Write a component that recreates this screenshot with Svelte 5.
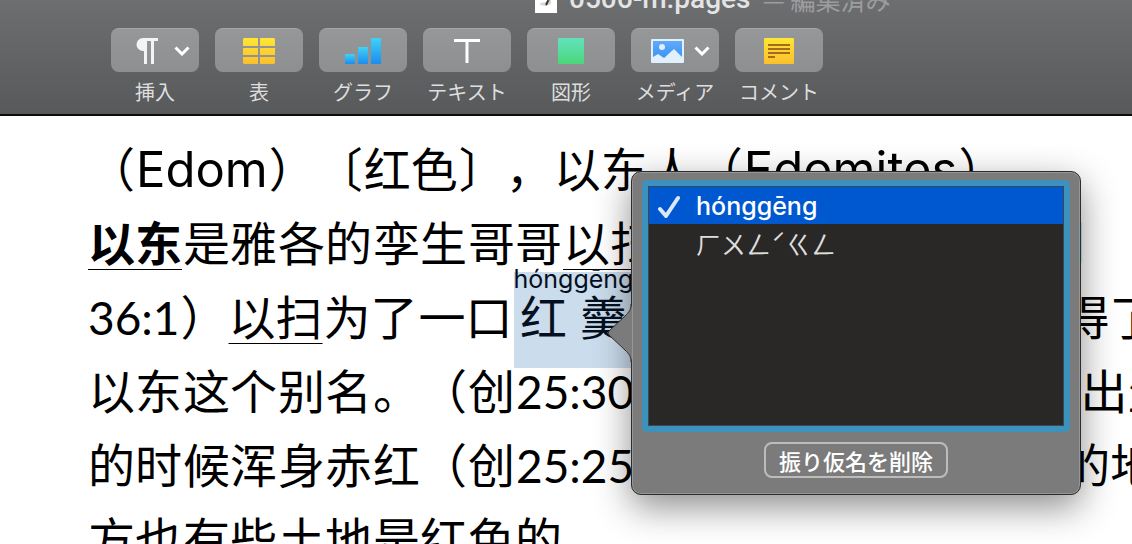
<script lang="ts">
  type Token = { t: string; kind?: 'word' | 'num' | 'link' | 'head' | 'ruby'; rt?: string };

  const tools = [
    { id: 'insert', label: '挿入', menu: true },
    { id: 'table', label: '表' },
    { id: 'chart', label: 'グラフ' },
    { id: 'text', label: 'テキスト' },
    { id: 'shape', label: '図形' },
    { id: 'media', label: 'メディア', menu: true },
    { id: 'comment', label: 'コメント' },
  ];

  const lines: Token[][] = [
    [{ t: '（' }, { t: 'Edom', kind: 'word' }, { t: '）〔' }, { t: '红色' }, { t: '〕，' }, { t: '以东' }, { t: '人（' }, { t: 'Edomites', kind: 'word' }, { t: '）' }],
    [{ t: '以东', kind: 'head' }, { t: '是雅' }, { t: '各的' }, { t: '孪生' }, { t: '哥哥' }, { t: '以扫', kind: 'link' }, { t: '的另' }, { t: '一个' }, { t: '名字' }, { t: '。（' }, { t: '创' }],
    [{ t: '36:1', kind: 'num' }, { t: '）' }, { t: '以扫', kind: 'link' }, { t: '为了' }, { t: '一口' }, { t: '红羹', kind: 'ruby', rt: 'hónggēng' }, { t: '出卖' }, { t: '了长' }, { t: '子权' }, { t: '，因' }, { t: '此' }, { t: '得了' }],
    [{ t: '以东' }, { t: '这个' }, { t: '别名' }, { t: '。（' }, { t: '创' }, { t: '25:30;34', kind: 'num' }, { t: '）另' }, { t: '外，' }, { t: '以扫' }, { t: '刚刚' }, { t: '出生' }],
    [{ t: '的时' }, { t: '候浑' }, { t: '身赤' }, { t: '红（' }, { t: '创' }, { t: '25:25', kind: 'num' }, { t: '），' }, { t: '以扫' }, { t: '后代' }, { t: '所居' }, { t: '住' }, { t: '的地' }],
    [{ t: '方也' }, { t: '有些' }, { t: '土地' }, { t: '是红' }, { t: '色的' }, { t: '。' }],
  ];

  const readings = [
    { text: 'hónggēng', script: 'pinyin' },
    { text: 'ㄏㄨㄥˊㄍㄥ', script: 'zhuyin' },
  ];
  let selected = $state('hónggēng');
  let open = $state(true);
</script>

<div class="window">
  <header class="toolbar">
    <div class="title">
      <svg class="doc-icon" width="22" height="28" viewBox="0 0 22 28" aria-hidden="true">
        <rect width="22" height="28" fill="#fff" />
        <path d="M5 18l6-1 5-2v4l-5 2-6-1z" fill="#d9d9d9" />
        <path d="M15 12l-4 8" stroke="#333" stroke-width="2" />
        <path d="M13 14l2 1" stroke="#e79a2c" stroke-width="2" />
      </svg>
      <span class="file">0506-m.pages</span>
      <span class="edited">— 編集済み</span>
    </div>
    <nav class="tools">
      {#each tools as tool}
        <div class="tool">
          <button class="tool-btn" class:with-menu={tool.menu} id="tool-{tool.id}" aria-labelledby="label-{tool.id}">
            {#if tool.id === 'insert'}
              <svg width="33" height="28" viewBox="-4 0 33 28">
                <path d="M8 1H23V4H19V27H16V4H12V27H9V14H8A6.5 6.5 0 0 1 8 1Z" fill="#f4f4f4" />
              </svg>
            {:else if tool.id === 'table'}
              <svg width="32" height="26" viewBox="0 0 32 26">
                <defs>
                  <linearGradient id="gold" x1="0" y1="0" x2="0" y2="26" gradientUnits="userSpaceOnUse">
                    <stop offset="0" stop-color="#fee635" /><stop offset="1" stop-color="#fbbf2c" />
                  </linearGradient>
                </defs>
                <path d="M1 0H15V8H0V1ZM17 0H31L32 1V8H17ZM0 10H15V17H0ZM17 10H32V17H17ZM0 19H15V26H1L0 25ZM17 19H32V25L31 26H17Z" fill="url(#gold)" />
              </svg>
            {:else if tool.id === 'chart'}
              <svg width="36" height="26" viewBox="0 0 36 26">
                <defs>
                  <linearGradient id="sky" x1="0" y1="0" x2="0" y2="1">
                    <stop offset="0" stop-color="#3fd2f5" /><stop offset="1" stop-color="#1c8dee" />
                  </linearGradient>
                </defs>
                <rect y="16" width="10" height="10" rx="1" fill="url(#sky)" />
                <rect x="13" y="9" width="10" height="17" rx="1" fill="url(#sky)" />
                <rect x="26" width="10" height="26" rx="1" fill="url(#sky)" />
              </svg>
            {:else if tool.id === 'text'}
              <svg width="26" height="24" viewBox="0 0 26 24">
                <path d="M0 1.5H26M13 1.5V24" stroke="#fff" stroke-width="3" />
              </svg>
            {:else if tool.id === 'shape'}
              <svg width="26" height="26" viewBox="0 0 26 26">
                <defs>
                  <linearGradient id="mint" x1="0" y1="0" x2="0" y2="1">
                    <stop offset="0" stop-color="#63e2bd" /><stop offset="1" stop-color="#4bd67b" />
                  </linearGradient>
                </defs>
                <rect width="26" height="26" rx="1" fill="url(#mint)" />
              </svg>
            {:else if tool.id === 'media'}
              <svg width="33" height="24" viewBox="0 0 33 24">
                <defs>
                  <linearGradient id="blue" x1="0" y1="0" x2="0" y2="1">
                    <stop offset="0" stop-color="#62aaf9" /><stop offset="1" stop-color="#3490f5" />
                  </linearGradient>
                </defs>
                <rect width="33" height="24" rx="1" fill="#e2effc" />
                <rect x="2" y="2" width="29" height="20" fill="url(#blue)" />
                <circle cx="11" cy="8" r="3" fill="#e2effc" />
                <path d="M2 18L7 15L13 19L23 10L31 18V22H2Z" fill="#e2effc" />
              </svg>
            {:else}
              <svg width="30" height="26" viewBox="0 0 30 26">
                <defs>
                  <linearGradient id="note" x1="0" y1="0" x2="0" y2="1">
                    <stop offset="0" stop-color="#fee635" /><stop offset="1" stop-color="#fbbf2c" />
                  </linearGradient>
                </defs>
                <rect width="30" height="26" rx="1" fill="url(#note)" />
                <path d="M4 7H26M4 11H26M4 15H26M4 19H11" stroke="#a56a1c" stroke-width="2" />
              </svg>
            {/if}
            {#if tool.menu}
              <svg class="chevron" width="16" height="10" viewBox="0 0 16 10">
                <path d="M1.5 1.5L8 8L14.5 1.5" fill="none" stroke="#fff" stroke-width="3" />
              </svg>
            {/if}
          </button>
          <label class="tool-label" id="label-{tool.id}" for="tool-{tool.id}">{tool.label}</label>
        </div>
      {/each}
    </nav>
  </header>

  <main class="page" lang="zh-Hans">
    {#each lines as line}
      <p class="line">
        {#each line as token}
          {#if token.kind === 'ruby'}
            <span class="selection"><ruby>{token.t}<rt>{token.rt}</rt></ruby></span>
          {:else}
            <span class={token.kind}>{token.t}</span>
          {/if}
        {/each}
      </p>
    {/each}
  </main>

  {#if open}
    <div class="popover">
      <svg class="arrow" width="25" height="58" viewBox="0 0 25 58" aria-hidden="true">
        <path d="M25 0C24 6 22 8 18 12L2 27Q0 29 2 31L18 46C22 50 24 52 25 58Z" fill="#7b7b7b" />
        <path d="M24 0C24 6 22 8 18 12L2 27Q0 29 2 31L18 46C22 50 24 52 24 58" fill="none" stroke="#2d2d2d" />
      </svg>
      <div class="list" role="radiogroup" aria-label="振り仮名">
        {#each readings as reading}
          <label class="row {reading.script}" class:active={selected === reading.text}>
            <input type="radio" name="reading" value={reading.text} bind:group={selected} />
            <span class="mark">
              {#if selected === reading.text}
                <svg width="24" height="24" viewBox="0 0 24 24">
                  <path d="M4 15L10 22L22 4" fill="none" stroke="#dbe8fb" stroke-width="4" stroke-linecap="round" stroke-linejoin="round" />
                </svg>
              {/if}
            </span>
            {reading.text}
          </label>
        {/each}
      </div>
      <button class="remove" onclick={() => (open = false)}>振り仮名を削除</button>
    </div>
  {/if}
</div>

<style>
  :global(body) {
    margin: 0;
    background: #fff;
  }

  .window {
    position: relative;
    height: 100vh;
    overflow: hidden;
    font-family: Inter, "Noto Sans CJK JP", sans-serif;
  }

  /* Toolbar */
  .toolbar {
    box-sizing: border-box;
    height: 116px;
    overflow: hidden;
    background: linear-gradient(#6d6e70, #58595b);
    border-bottom: 2px solid #0c0c0c;
  }

  .title {
    display: flex;
    align-items: center;
    gap: 12px;
    height: 32px;
    margin-top: -17px;
    padding-left: 535px;
    line-height: 32px;
    white-space: nowrap;
  }
  .file { font-family: Roboto, sans-serif; font-size: 28px; font-weight: 500; color: #e4e4e5; }
  .edited { font-family: "Noto Sans CJK JP", sans-serif; font-size: 25px; color: #9c9d9f; }

  .tools {
    display: flex;
    gap: 16px;
    padding: 13px 111px 0;
  }

  .tool {
    display: flex;
    flex-direction: column;
    align-items: center;
    gap: 6px;
    width: 88px;
  }

  .tool-btn {
    display: flex;
    align-items: center;
    justify-content: center;
    gap: 10px;
    width: 88px;
    height: 44px;
    padding: 0;
    border: none;
    border-top: 1px solid #a5a6a8;
    border-radius: 8px;
    background: linear-gradient(#969799, #8e8f91);
  }
  .tool-btn.with-menu { padding-left: 10px; }

  .tool-label {
    font-family: "Noto Sans CJK JP", sans-serif;
    font-size: 20px;
    line-height: 28px;
    color: #dededf;
    white-space: nowrap;
  }

  /* Document */
  .page {
    padding: 14px 0 0 88px;
    font-family: "Noto Sans CJK SC", sans-serif;
    font-size: 47px;
    line-height: 74px;
    color: #000;
    text-spacing-trim: space-all;
  }

  .line {
    display: flex;
    align-items: baseline;
    gap: 1px;
    height: 74px;
    margin: 0;
    white-space: nowrap;
  }

  .word { font-family: Inter, sans-serif; font-size: 49px; }
  .num { font-family: Lato, sans-serif; font-size: 46px; }
  .head { font-weight: 700; }
  .head,
  .link {
    text-decoration: underline;
    text-decoration-thickness: 1px;
    text-underline-offset: 8px;
  }

  .selection {
    margin: -30px 0 -16px;
    padding-bottom: 16px;
    background: linear-gradient(transparent 5px, #cbdcec 5px);
    color: #04101f;
  }
  .selection rt {
    font-family: Inter, sans-serif;
    font-size: 25px;
    line-height: 20px;
  }

  /* Reading popover */
  .popover {
    position: absolute;
    top: 171px;
    left: 631px;
    box-sizing: border-box;
    width: 450px;
    padding: 8px 10px 16px;
    border: 1px solid #2d2d2d;
    border-radius: 10px;
    background: #7b7b7b;
    box-shadow: inset 0 0 0 1px #969696, 0 12px 36px rgba(0, 0, 0, 0.45);
    display: flex;
    flex-direction: column;
    align-items: center;
    gap: 10px;
  }

  .arrow {
    position: absolute;
    top: 132px;
    left: -25px;
  }

  .list {
    box-sizing: border-box;
    width: 100%;
    height: 252px;
    border: 6px solid #3c91bd;
    border-radius: 5px;
    background: #292826;
    box-shadow: inset 0 0 0 1px #3b4a52;
    padding: 1px;
  }

  .row {
    display: flex;
    align-items: center;
    height: 37px;
    padding-left: 7px;
    font-size: 25px;
    color: #dededd;
  }
  .row.active {
    background: #0058d0;
    color: #fff;
    font-weight: 500;
  }
  .row.zhuyin { font-family: "Noto Sans CJK TC", sans-serif; }
  .row input {
    position: absolute;
    opacity: 0;
    pointer-events: none;
  }

  .mark {
    display: flex;
    width: 40px;
  }

  .remove {
    height: 36px;
    padding: 0 13px;
    border: 2px solid #bcbcbc;
    border-radius: 8px;
    background: transparent;
    font-family: "Noto Sans CJK JP", sans-serif;
    font-size: 22px;
    font-weight: 500;
    line-height: 30px;
    color: #fff;
    white-space: nowrap;
  }
</style>
